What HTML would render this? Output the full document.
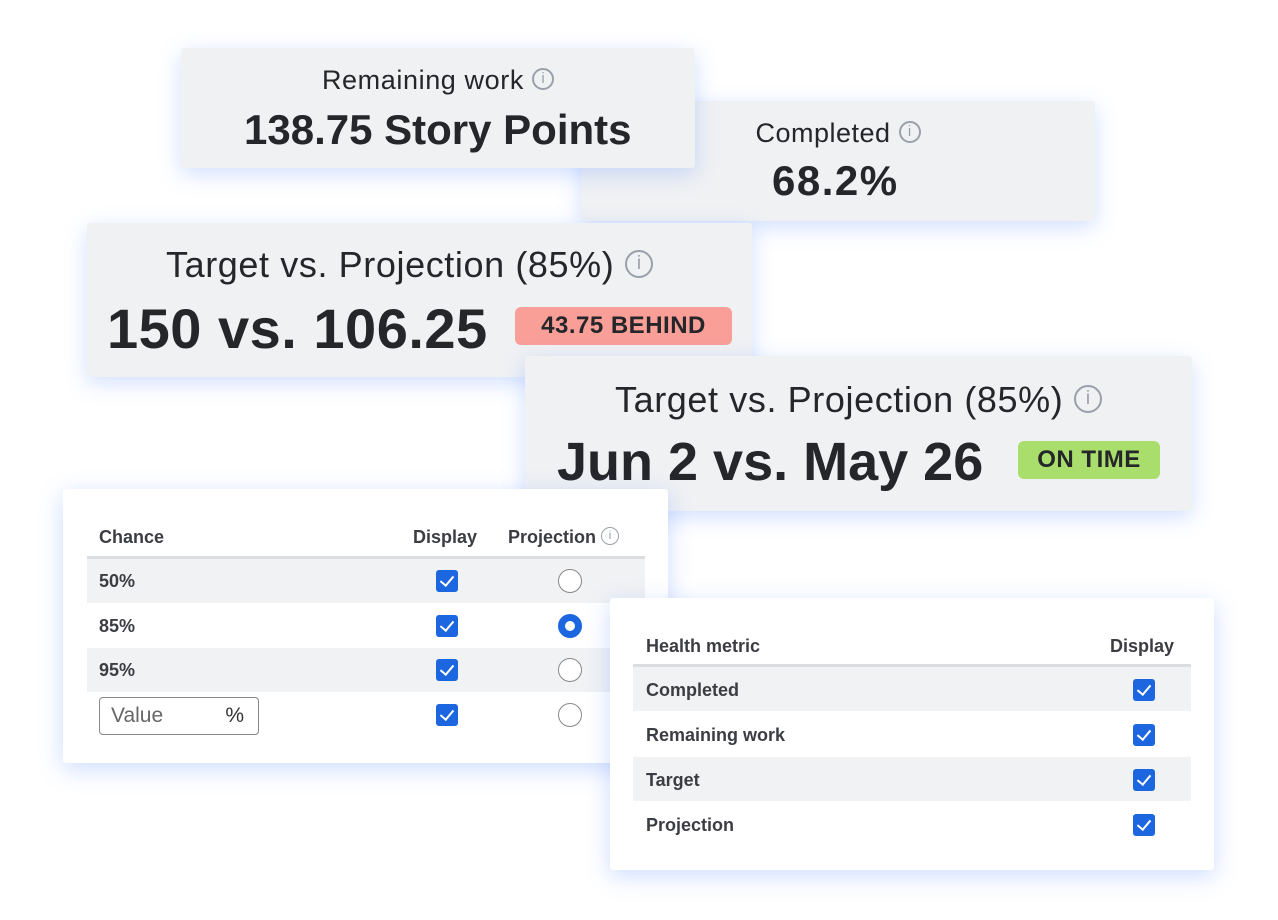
<!DOCTYPE html>
<html><head><style>
*{box-sizing:border-box;margin:0;padding:0}
body{width:1278px;height:920px;background:#fff;position:relative;overflow:hidden;font-family:"Liberation Sans",sans-serif;color:#25262a}
.c{position:absolute;background:#f0f1f3;border-radius:3px;box-shadow:0 6px 22px rgba(90,140,255,.28);text-align:center}
.t{position:absolute;left:0;right:0;white-space:nowrap}
.v{position:absolute;font-weight:bold;white-space:nowrap}
.i{display:inline-block;border:2px solid #9aa0aa;border-radius:50%;color:#9aa0aa;text-align:center;font-weight:normal;vertical-align:middle;position:relative;top:-3px;letter-spacing:0}
.badge{position:absolute;border-radius:6px;font-weight:bold;text-align:center;letter-spacing:.5px}
.tc{position:absolute;background:#fff;border-radius:3px;box-shadow:0 6px 24px rgba(90,140,255,.3)}
.h{position:absolute;font-size:18px;font-weight:bold;color:#3c3d42}
.row{position:absolute;height:44px}
.g{background:#f1f2f4}
.lab{position:absolute;font-size:18px;font-weight:bold;color:#3c3d42}
.cb{position:absolute;width:22px;height:22px;background:#1c66e0;border-radius:3px}
.cb:after{content:"";position:absolute;left:7px;top:3px;width:6px;height:11px;border:solid #fff;border-width:0 2.5px 2.5px 0;transform:rotate(40deg)}
.rd{position:absolute;width:24px;height:24px;border:1.5px solid #888;border-radius:50%;background:#fff}
.rd.on{border:7px solid #1c66e0}
</style></head><body>

<div class="c" style="left:581px;top:101px;width:514px;height:120px">
 <div class="t" style="top:17px;font-size:27px;letter-spacing:.5px">Completed <span class="i" style="width:22px;height:22px;font-size:15px;line-height:18px">i</span></div>
 <div class="v" style="left:191px;top:56px;font-size:42px;letter-spacing:1.5px">68.2%</div>
</div>
<div class="c" style="left:181px;top:48px;width:514px;height:120px">
 <div class="t" style="top:17px;font-size:27px;letter-spacing:.6px">Remaining work <span class="i" style="width:22px;height:22px;font-size:15px;line-height:18px">i</span></div>
 <div class="v" style="left:63px;top:58px;font-size:42px">138.75 Story Points</div>
</div>
<div class="c" style="left:87px;top:223px;width:665px;height:154px">
 <div class="t" style="top:21px;font-size:36px;letter-spacing:.6px;padding-right:20px">Target vs. Projection (85%) <span class="i" style="width:28px;height:28px;font-size:19px;line-height:24px">i</span></div>
 <div class="v" style="left:20px;top:73px;font-size:56px;letter-spacing:.5px">150 vs. 106.25</div>
 <div class="badge" style="left:428px;top:84px;width:217px;height:38px;background:#f99f98;font-size:24px;line-height:38px">43.75 BEHIND</div>
</div>
<div class="c" style="left:525px;top:356px;width:667px;height:155px">
 <div class="t" style="top:23px;font-size:36px;letter-spacing:.6px">Target vs. Projection (85%) <span class="i" style="width:28px;height:28px;font-size:19px;line-height:24px">i</span></div>
 <div class="v" style="left:32px;top:75px;font-size:54px">Jun 2 vs. May 26</div>
 <div class="badge" style="left:493px;top:85px;width:142px;height:38px;background:#a9de6c;font-size:24px;line-height:38px">ON TIME</div>
</div>

<div class="tc" style="left:63px;top:489px;width:605px;height:274px">
 <div class="h" style="left:36px;top:38px">Chance</div>
 <div class="h" style="left:350px;top:38px">Display</div>
 <div class="h" style="left:445px;top:38px">Projection <span class="i" style="width:18px;height:18px;font-size:12px;line-height:14px;border-width:1.5px;top:-2px">i</span></div>
 <div style="position:absolute;left:24px;top:67px;width:558px;height:3px;background:#dcdde0"></div>
 <div class="row g" style="left:24px;top:70px;width:558px"></div>
 <div class="row g" style="left:24px;top:159px;width:558px"></div>
 <div class="lab" style="left:36px;top:82px">50%</div>
 <div class="lab" style="left:36px;top:127px">85%</div>
 <div class="lab" style="left:36px;top:171px">95%</div>
 <div style="position:absolute;left:36px;top:208px;width:160px;height:38px;border:1.5px solid #888;border-radius:4px;font-size:21px;color:#666;line-height:35px;padding-left:11px">Value<span style="position:absolute;right:14px;color:#333">%</span></div>
 <div class="cb" style="left:373px;top:81px"></div>
 <div class="cb" style="left:373px;top:126px"></div>
 <div class="cb" style="left:373px;top:170px"></div>
 <div class="cb" style="left:373px;top:215px"></div>
 <div class="rd" style="left:495px;top:80px"></div>
 <div class="rd on" style="left:495px;top:125px"></div>
 <div class="rd" style="left:495px;top:169px"></div>
 <div class="rd" style="left:495px;top:214px"></div>
</div>

<div class="tc" style="left:610px;top:598px;width:604px;height:272px">
 <div class="h" style="left:36px;top:38px">Health metric</div>
 <div class="h" style="left:500px;top:38px">Display</div>
 <div style="position:absolute;left:23px;top:66px;width:558px;height:3px;background:#dcdde0"></div>
 <div class="row g" style="left:23px;top:69px;width:558px"></div>
 <div class="row g" style="left:23px;top:159px;width:558px"></div>
 <div class="lab" style="left:36px;top:82px">Completed</div>
 <div class="lab" style="left:36px;top:127px">Remaining work</div>
 <div class="lab" style="left:36px;top:172px">Target</div>
 <div class="lab" style="left:36px;top:217px">Projection</div>
 <div class="cb" style="left:523px;top:81px"></div>
 <div class="cb" style="left:523px;top:126px"></div>
 <div class="cb" style="left:523px;top:171px"></div>
 <div class="cb" style="left:523px;top:216px"></div>
</div>
</body></html>
